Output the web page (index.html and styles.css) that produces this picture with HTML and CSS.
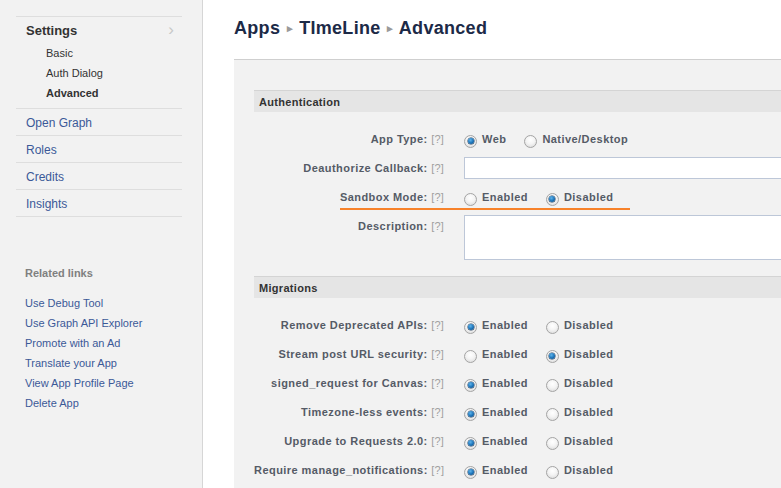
FILE: index.html
```html
<!DOCTYPE html>
<html>
<head>
<meta charset="utf-8">
<link rel="stylesheet" href="styles.css">
</head>
<body>
<div class="page">
  <aside class="sidebar">
    <nav class="nav">
      <div class="nav-group">
        <div class="nav-head"><span>Settings</span><span class="chev">&#x203A;</span></div>
        <a class="sub">Basic</a>
        <a class="sub">Auth Dialog</a>
        <a class="sub active">Advanced</a>
      </div>
      <a class="nav-item">Open Graph</a>
      <a class="nav-item">Roles</a>
      <a class="nav-item">Credits</a>
      <a class="nav-item">Insights</a>
    </nav>
    <div class="related">
      <div class="related-head">Related links</div>
      <a>Use Debug Tool</a>
      <a>Use Graph API Explorer</a>
      <a>Promote with an Ad</a>
      <a>Translate your App</a>
      <a>View App Profile Page</a>
      <a>Delete App</a>
    </div>
  </aside>
  <main class="main">
    <h1 class="crumbs">Apps <span class="sep">&#9656;</span> TImeLine <span class="sep">&#9656;</span> Advanced</h1>
    <div class="panel">
      <div class="section-head">Authentication</div>
      <div class="form">
        <div class="row">
          <div class="label">App Type: <span class="q">[?]</span></div>
          <div class="opts">
            <span class="opt"><span class="radio on"></span>Web</span>
            <span class="opt"><span class="radio"></span>Native/Desktop</span>
          </div>
        </div>
        <div class="row">
          <div class="label">Deauthorize Callback: <span class="q">[?]</span></div>
          <div class="field"><span class="input"></span></div>
        </div>
        <div class="row mark">
          <div class="label">Sandbox Mode: <span class="q">[?]</span></div>
          <div class="opts">
            <span class="opt"><span class="radio"></span>Enabled</span>
            <span class="opt"><span class="radio on"></span>Disabled</span>
          </div>
          <span class="underline"></span>
        </div>
        <div class="row">
          <div class="label">Description: <span class="q">[?]</span></div>
          <div class="field tall"><span class="textarea"></span></div>
        </div>
      </div>

      <div class="section-head">Migrations</div>
      <div class="form">
        <div class="row">
          <div class="label">Remove Deprecated APIs: <span class="q">[?]</span></div>
          <div class="opts">
            <span class="opt"><span class="radio on"></span>Enabled</span>
            <span class="opt"><span class="radio"></span>Disabled</span>
          </div>
        </div>
        <div class="row">
          <div class="label">Stream post URL security: <span class="q">[?]</span></div>
          <div class="opts">
            <span class="opt"><span class="radio"></span>Enabled</span>
            <span class="opt"><span class="radio on"></span>Disabled</span>
          </div>
        </div>
        <div class="row">
          <div class="label">signed_request for Canvas: <span class="q">[?]</span></div>
          <div class="opts">
            <span class="opt"><span class="radio on"></span>Enabled</span>
            <span class="opt"><span class="radio"></span>Disabled</span>
          </div>
        </div>
        <div class="row">
          <div class="label">Timezone-less events: <span class="q">[?]</span></div>
          <div class="opts">
            <span class="opt"><span class="radio on"></span>Enabled</span>
            <span class="opt"><span class="radio"></span>Disabled</span>
          </div>
        </div>
        <div class="row">
          <div class="label">Upgrade to Requests 2.0: <span class="q">[?]</span></div>
          <div class="opts">
            <span class="opt"><span class="radio on"></span>Enabled</span>
            <span class="opt"><span class="radio"></span>Disabled</span>
          </div>
        </div>
        <div class="row">
          <div class="label">Require manage_notifications: <span class="q">[?]</span></div>
          <div class="opts">
            <span class="opt"><span class="radio on"></span>Enabled</span>
            <span class="opt"><span class="radio"></span>Disabled</span>
          </div>
        </div>
      </div>
    </div>
  </main>
</div>
</body>
</html>
```

FILE: styles.css
```css
* { box-sizing: border-box; }
html, body {
  margin: 0;
  padding: 0;
  height: 100%;
  overflow: hidden;
}
body {
  font-family: "Liberation Sans", Arial, sans-serif;
  font-size: 11px;
  color: #333;
  background: #fff;
}
a { color: #3b5998; text-decoration: none; cursor: pointer; }

.page {
  display: flex;
  width: 781px;
  height: 488px;
}

/* Sidebar */
.sidebar {
  width: 203px;
  flex: none;
  background: #f2f2f2;
  border-right: 1px solid #d6d6d6;
  padding: 16px 0 0 16px;
}
.nav {
  width: 166px;
  border-top: 1px solid #dedede;
  display: flex;
  flex-direction: column;
}
.nav-group {
  padding: 4px 0 5px 0;
  border-bottom: 1px solid #dedede;
  display: flex;
  flex-direction: column;
}
.nav-head {
  display: flex;
  justify-content: space-between;
  align-items: center;
  height: 18px;
  padding: 0 8px 0 10px;
  font-size: 13px;
  font-weight: bold;
  color: #333;
  margin-bottom: 4px;
}
.chev {
  font-size: 17px;
  font-weight: normal;
  color: #c8c8c8;
  line-height: 18px;
}
.sub {
  display: block;
  height: 20px;
  line-height: 20px;
  padding-left: 30px;
  color: #333;
  font-size: 11px;
}
.sub.active { font-weight: bold; }
.nav-item {
  display: block;
  height: 27px;
  line-height: 28px;
  padding-left: 10px;
  font-size: 12px;
  border-bottom: 1px solid #dedede;
}
.related {
  margin-top: 46px;
  padding-left: 9px;
  display: flex;
  flex-direction: column;
}
.related-head {
  font-weight: bold;
  color: #808080;
  font-size: 11px;
  line-height: 20px;
  margin-bottom: 10px;
}
.related a {
  line-height: 20px;
  font-size: 11px;
}

/* Main */
.main {
  flex: 1;
  min-width: 0;
  overflow: hidden;
  padding-left: 31px;
}
.crumbs {
  margin: 0;
  padding-top: 17px;
  height: 59px;
  font-size: 18px;
  line-height: 22px;
  font-weight: bold;
  color: #1c2a47;
  white-space: nowrap;
  letter-spacing: 0.3px;
}
.sep {
  color: #9a9a9a;
  font-size: 11px;
  vertical-align: 2px;
  margin: 0 1px;
}
.panel {
  width: 620px;
  background: #f2f2f2;
  border-top: 1px solid #cfcfcf;
  padding: 30px 0 0 20px;
  min-height: 440px;
}
.section-head {
  height: 22px;
  line-height: 22px;
  background: #e5e5e5;
  border-top: 1px solid #d4d4d4;
  padding-left: 5px;
  font-weight: bold;
  color: #333;
  letter-spacing: 0.3px;
}
.form {
  display: flex;
  flex-direction: column;
  gap: 7px;
  padding: 16px 0 16px 0;
}
.row {
  position: relative;
  display: grid;
  grid-template-columns: 190px 1fr;
  column-gap: 20px;
  align-items: start;
}
.label {
  text-align: right;
  font-weight: bold;
  color: #555b66;
  line-height: 22px;
  white-space: nowrap;
  letter-spacing: 0.45px;
}
.q {
  font-weight: normal;
  color: #a0a0a0;
  letter-spacing: 0.2px;
}
.opts {
  display: flex;
  gap: 18px;
  height: 22px;
  align-items: center;
}
.opt {
  display: inline-flex;
  align-items: center;
  gap: 5px;
  font-weight: bold;
  color: #555b66;
  font-size: 11px;
  letter-spacing: 0.45px;
}
.radio {
  width: 13px;
  height: 13px;
  border-radius: 50%;
  border: 1px solid #a4a4a4;
  background: radial-gradient(circle at 50% 35%, #ffffff 0%, #f4f4f4 45%, #d6d6d6 100%);
  position: relative;
  top: 2px;
  flex: none;
}
.radio.on::after {
  content: "";
  position: absolute;
  left: 2.5px;
  top: 2.5px;
  width: 6px;
  height: 6px;
  border-radius: 50%;
  background: radial-gradient(circle at 40% 35%, #5fb4ea 0%, #1a72b8 55%, #0b3f70 100%);
  box-shadow: 0 0 0 0.5px #1b3a5a;
}
.field { height: 22px; }
.field.tall { height: 45px; }
.input {
  display: block;
  height: 22px;
  background: #fff;
  border: 1px solid #bdc7d8;
}
.textarea {
  display: block;
  height: 45px;
  background: #fff;
  border: 1px solid #bdc7d8;
}
.underline {
  position: absolute;
  left: 86px;
  top: 22px;
  width: 290px;
  height: 2px;
  background: #f7822a;
}
```
